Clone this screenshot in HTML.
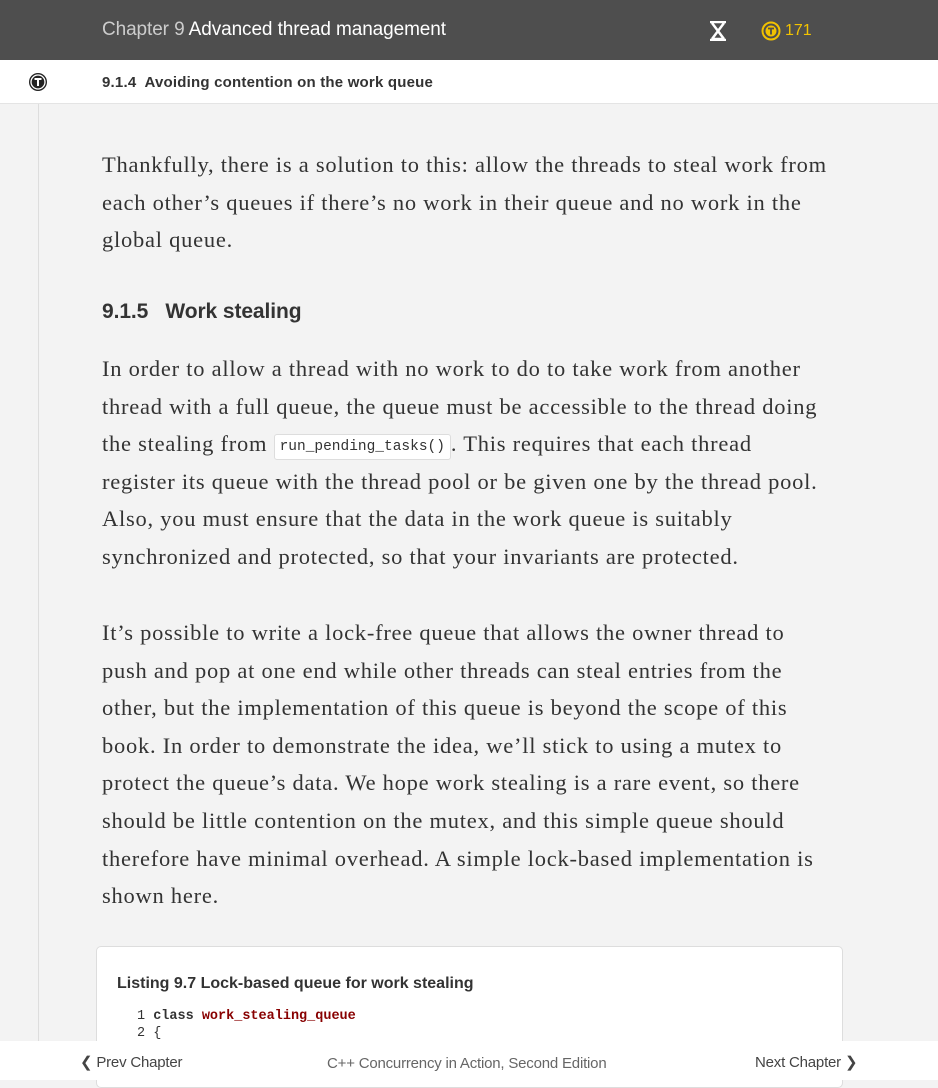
<!DOCTYPE html>
<html><head><meta charset="utf-8"><style>
body{margin:0;width:938px;height:1080px;overflow:hidden;background:#f3f3f3;font-family:"Liberation Sans",sans-serif;position:relative}
.top{position:absolute;left:0;top:0;width:938px;height:60px;background:#4e4e4e;color:#fff}
.top .t{position:absolute;left:102px;top:19px;font-size:19px;color:#fff;letter-spacing:-0.1px}
.top .t span{color:#ccc}
.sub{position:absolute;left:0;top:60px;width:938px;height:43px;background:#fff;border-bottom:1px solid #e4e4e4}
.sub .t{position:absolute;left:102px;top:14px;font-size:15px;font-weight:bold;color:#333;letter-spacing:0.2px}
.vline{position:absolute;left:38px;top:104px;width:1px;height:940px;background:#ddd}
.p{position:absolute;left:102px;width:800px;font-family:"Liberation Serif",serif;font-size:22.5px;line-height:37.6px;color:#333;letter-spacing:0.75px;white-space:nowrap}
h3{position:absolute;left:102px;top:300px;margin:0;font-size:21px;font-weight:bold;color:#333;letter-spacing:-0.1px}
code{font-family:"Liberation Mono",monospace;font-size:14.5px;border:1px solid #ddd;border-radius:3px;background:#fff;padding:2px 5px;letter-spacing:0;line-height:20px;display:inline-block;vertical-align:1px}
.card{position:absolute;left:96px;top:946px;width:745px;height:140px;background:#fff;border:1px solid #ddd;border-radius:5px}
.foot{position:absolute;left:0;top:1041px;width:938px;height:39px;background:#fff;font-size:15px;color:#444;letter-spacing:-0.2px}
</style></head><body>
<div class="top"><div class="t"><span>Chapter 9</span> Advanced thread management</div>
<svg style="position:absolute;left:708px;top:21px" width="20" height="20" viewBox="0 0 20 20"><path d="M2 1h16M2 19h16M4 2l12 16M16 2L4 18M4 18h12" stroke="#fff" stroke-width="2.5" fill="none"/></svg>
<svg style="position:absolute;left:761px;top:21px" width="20" height="20" viewBox="0 0 20 20"><circle cx="10" cy="10" r="8.5" fill="none" stroke="#f2c200" stroke-width="2"/><circle cx="10" cy="10" r="5.5" fill="#f2c200"/><path d="M7 7.5h6M10 7.5v6" stroke="#4e4e4e" stroke-width="1.8"/></svg>
<div style="position:absolute;left:785px;top:22px;color:#f2c200;font-size:16px">171</div></div>
<div class="sub"><svg style="position:absolute;left:28px;top:12px" width="20" height="20" viewBox="0 0 20 20"><circle cx="10" cy="10" r="9" fill="#222"/><circle cx="10" cy="10" r="7" fill="none" stroke="#fff" stroke-width="1.3"/><path d="M6.5 7h7M10 7v7" stroke="#fff" stroke-width="2"/></svg><div class="t">9.1.4&nbsp; Avoiding contention on the work queue</div></div>
<div class="vline"></div>
<div class="p" style="top:146px">Thankfully, there is a solution to this: allow the threads to steal work from<br>each other’s queues if there’s no work in their queue and no work in the<br>global queue.</div>
<h3>9.1.5&nbsp;&nbsp; Work stealing</h3>
<div class="p" style="top:350px">In order to allow a thread with no work to do to take work from another<br>thread with a full queue, the queue must be accessible to the thread doing<br>the stealing from <code>run_pending_tasks()</code>. This requires that each thread<br>register its queue with the thread pool or be given one by the thread pool.<br>Also, you must ensure that the data in the work queue is suitably<br>synchronized and protected, so that your invariants are protected.</div>
<div class="p" style="top:614px">It’s possible to write a lock-free queue that allows the owner thread to<br>push and pop at one end while other threads can steal entries from the<br>other, but the implementation of this queue is beyond the scope of this<br>book. In order to demonstrate the idea, we’ll stick to using a mutex to<br>protect the queue’s data. We hope work stealing is a rare event, so there<br>should be little contention on the mutex, and this simple queue should<br>therefore have minimal overhead. A simple lock-based implementation is<br>shown here.</div>
<div class="card"><div style="position:absolute;left:20px;top:28px;font-size:16px;font-weight:bold;color:#333;letter-spacing:0px">Listing 9.7 Lock-based queue for work stealing</div>
<div style="position:absolute;left:40px;top:61px;font-family:'Liberation Mono',monospace;font-size:13.5px;line-height:17px;color:#333">1 <b>class</b> <b style="color:#800">work_stealing_queue</b><br>2 {</div></div>
<div class="foot"><div style="position:absolute;left:80px;top:12px">❮ Prev Chapter</div><div style="position:absolute;left:327px;top:14px;color:#666">C++ Concurrency in Action, Second Edition</div><div style="position:absolute;left:755px;top:12px">Next Chapter ❯</div></div>
</body></html>
